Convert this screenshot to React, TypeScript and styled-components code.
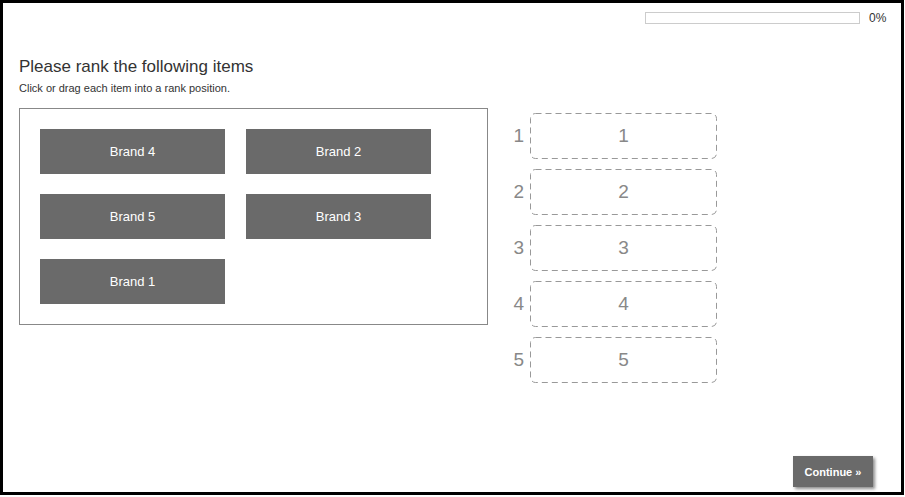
import React from 'react';
import styled, { createGlobalStyle } from 'styled-components';

const GlobalStyle = createGlobalStyle`
  html, body {
    margin: 0;
    padding: 0;
    background: #fff;
  }
  body {
    font-family: 'Liberation Sans', Arial, sans-serif;
  }
`;

// dashed outline with longer dashes than the browser's own dashed border
const slotOutline = encodeURIComponent(
  "<svg xmlns='http://www.w3.org/2000/svg' width='187' height='46'><rect x='0.5' y='0.5' width='186' height='45' rx='5' ry='5' fill='none' stroke='#999' stroke-width='1' stroke-dasharray='6 4'/></svg>"
);

const Frame = styled.div`
  box-sizing: border-box;
  width: 904px;
  height: 495px;
  border: 3px solid #000;
  padding: 9px 16px 5px 16px;
  display: flex;
  flex-direction: column;
  background: #fff;
`;

const ProgressRow = styled.div`
  display: flex;
  justify-content: flex-end;
  align-items: center;
  gap: 9px;
  height: 12px;
`;

const ProgressTrack = styled.div`
  box-sizing: border-box;
  width: 215px;
  height: 12px;
  border: 1px solid #ccc;
  background: #fff;
`;

const ProgressFill = styled.div`
  height: 100%;
  background: #6a6a6a;
`;

const ProgressLabel = styled.span`
  font-size: 12px;
  color: #333;
  width: 16px;
`;

const Title = styled.h1`
  margin: 32px 0 0 0;
  font-size: 17px;
  font-weight: normal;
  line-height: 22px;
  color: #333;
`;

const Hint = styled.p`
  margin: 3px 0 0 0;
  font-size: 11px;
  line-height: 14px;
  color: #333;
`;

const Body = styled.div`
  display: flex;
  align-items: flex-start;
  gap: 18px;
  margin-top: 13px;
`;

const ItemPool = styled.div`
  box-sizing: border-box;
  width: 469px;
  border: 1px solid #888;
  padding: 20px;
  display: grid;
  grid-template-columns: 185px 185px;
  grid-auto-rows: 45px;
  column-gap: 21px;
  row-gap: 20px;
`;

const Item = styled.div`
  background: #6a6a6a;
  color: #fff;
  font-size: 13px;
  display: flex;
  align-items: center;
  justify-content: center;
  cursor: pointer;
`;

const RankList = styled.div`
  display: flex;
  flex-direction: column;
  gap: 10px;
  margin-top: 5px;
`;

const RankRow = styled.div`
  display: grid;
  grid-template-columns: 18px 187px;
  column-gap: 6px;
  align-items: center;
`;

const RankNumber = styled.span`
  font-size: 19px;
  color: #888;
  text-align: right;
`;

const Slot = styled.div`
  box-sizing: border-box;
  height: 46px;
  background: url("data:image/svg+xml,${slotOutline}") no-repeat;
  display: flex;
  align-items: center;
  justify-content: center;
  font-size: 19px;
  color: #888;
`;

const Footer = styled.div`
  margin-top: auto;
  display: flex;
  justify-content: flex-end;
  padding-right: 12px;
`;

const ContinueButton = styled.button`
  width: 80px;
  height: 31px;
  border: none;
  background: #6a6a6a;
  color: #fff;
  font-family: 'Liberation Sans', Arial, sans-serif;
  font-size: 11px;
  font-weight: bold;
  box-shadow: 2px 2px 3px rgba(0, 0, 0, 0.45);
  cursor: pointer;
`;

const items = ['Brand 4', 'Brand 2', 'Brand 5', 'Brand 3', 'Brand 1'];
const ranks = [1, 2, 3, 4, 5];

export default function App() {
  const progress = 0;
  return (
    <>
      <GlobalStyle />
      <Frame>
        <ProgressRow>
          <ProgressTrack>
            <ProgressFill style={{ width: `${progress}%` }} />
          </ProgressTrack>
          <ProgressLabel>{progress}%</ProgressLabel>
        </ProgressRow>
        <Title>Please rank the following items</Title>
        <Hint>Click or drag each item into a rank position.</Hint>
        <Body>
          <ItemPool>
            {items.map((item) => (
              <Item key={item}>{item}</Item>
            ))}
          </ItemPool>
          <RankList>
            {ranks.map((rank) => (
              <RankRow key={rank}>
                <RankNumber>{rank}</RankNumber>
                <Slot>{rank}</Slot>
              </RankRow>
            ))}
          </RankList>
        </Body>
        <Footer>
          <ContinueButton>Continue »</ContinueButton>
        </Footer>
      </Frame>
    </>
  );
}
